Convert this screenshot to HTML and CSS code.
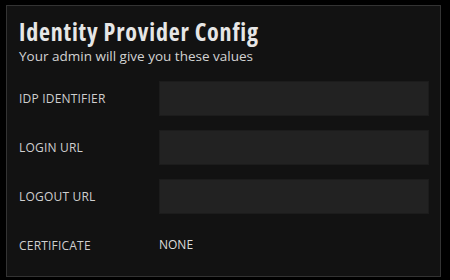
FILE: index.html
```html
<!DOCTYPE html>
<html>
<head>
<meta charset="utf-8">
<link rel="stylesheet" href="styles.css">
</head>
<body>
<div class="card">
  <div class="header">
    <h1 class="title">Identity Provider Config</h1>
    <p class="subtitle">Your admin will give you these values</p>
  </div>
  <div class="form">
    <div class="row">
      <span class="label">IDP IDENTIFIER</span>
      <div class="input"></div>
    </div>
    <div class="row">
      <span class="label">LOGIN URL</span>
      <div class="input"></div>
    </div>
    <div class="row">
      <span class="label">LOGOUT URL</span>
      <div class="input"></div>
    </div>
    <div class="row cert">
      <span class="label">CERTIFICATE</span>
      <span class="value">NONE</span>
    </div>
  </div>
</div>
</body>
</html>
```
FILE: styles.css
```css
html, body {
  margin: 0;
  padding: 0;
  background: #000;
}
body {
  padding: 5px 6px;
  font-family: "Open Sans", "Noto Sans", sans-serif;
}
.card {
  box-sizing: border-box;
  width: 435px;
  height: 272px;
  background: #121212;
  border: 1px solid #333;
  padding: 11px 11px 0 12px;
}
.title {
  margin: 0;
  font-size: 24px;
  line-height: 30px;
  font-weight: 700;
  font-stretch: 75%;
  letter-spacing: 0.8px;
  color: #e6e6e6;
}
.subtitle {
  margin: 0;
  font-size: 13.5px;
  line-height: 18px;
  font-stretch: 90%;
  color: #d2d2d2;
}
.form {
  margin-top: 16px;
  display: flex;
  flex-direction: column;
  gap: 14px;
}
.row {
  display: flex;
  align-items: center;
  height: 35px;
}
.label {
  width: 140px;
  flex: none;
  font-size: 12px;
  font-weight: 500;
  letter-spacing: 0.2px;
  color: #cfcfcf;
}
.input {
  flex: 1;
  height: 35px;
  box-sizing: border-box;
  background: #222;
  border: 1px solid #1c1c1c;
}
.value {
  font-size: 12px;
  font-weight: 500;
  color: #dcdcdc;
  margin-top: -2px;
}
```
